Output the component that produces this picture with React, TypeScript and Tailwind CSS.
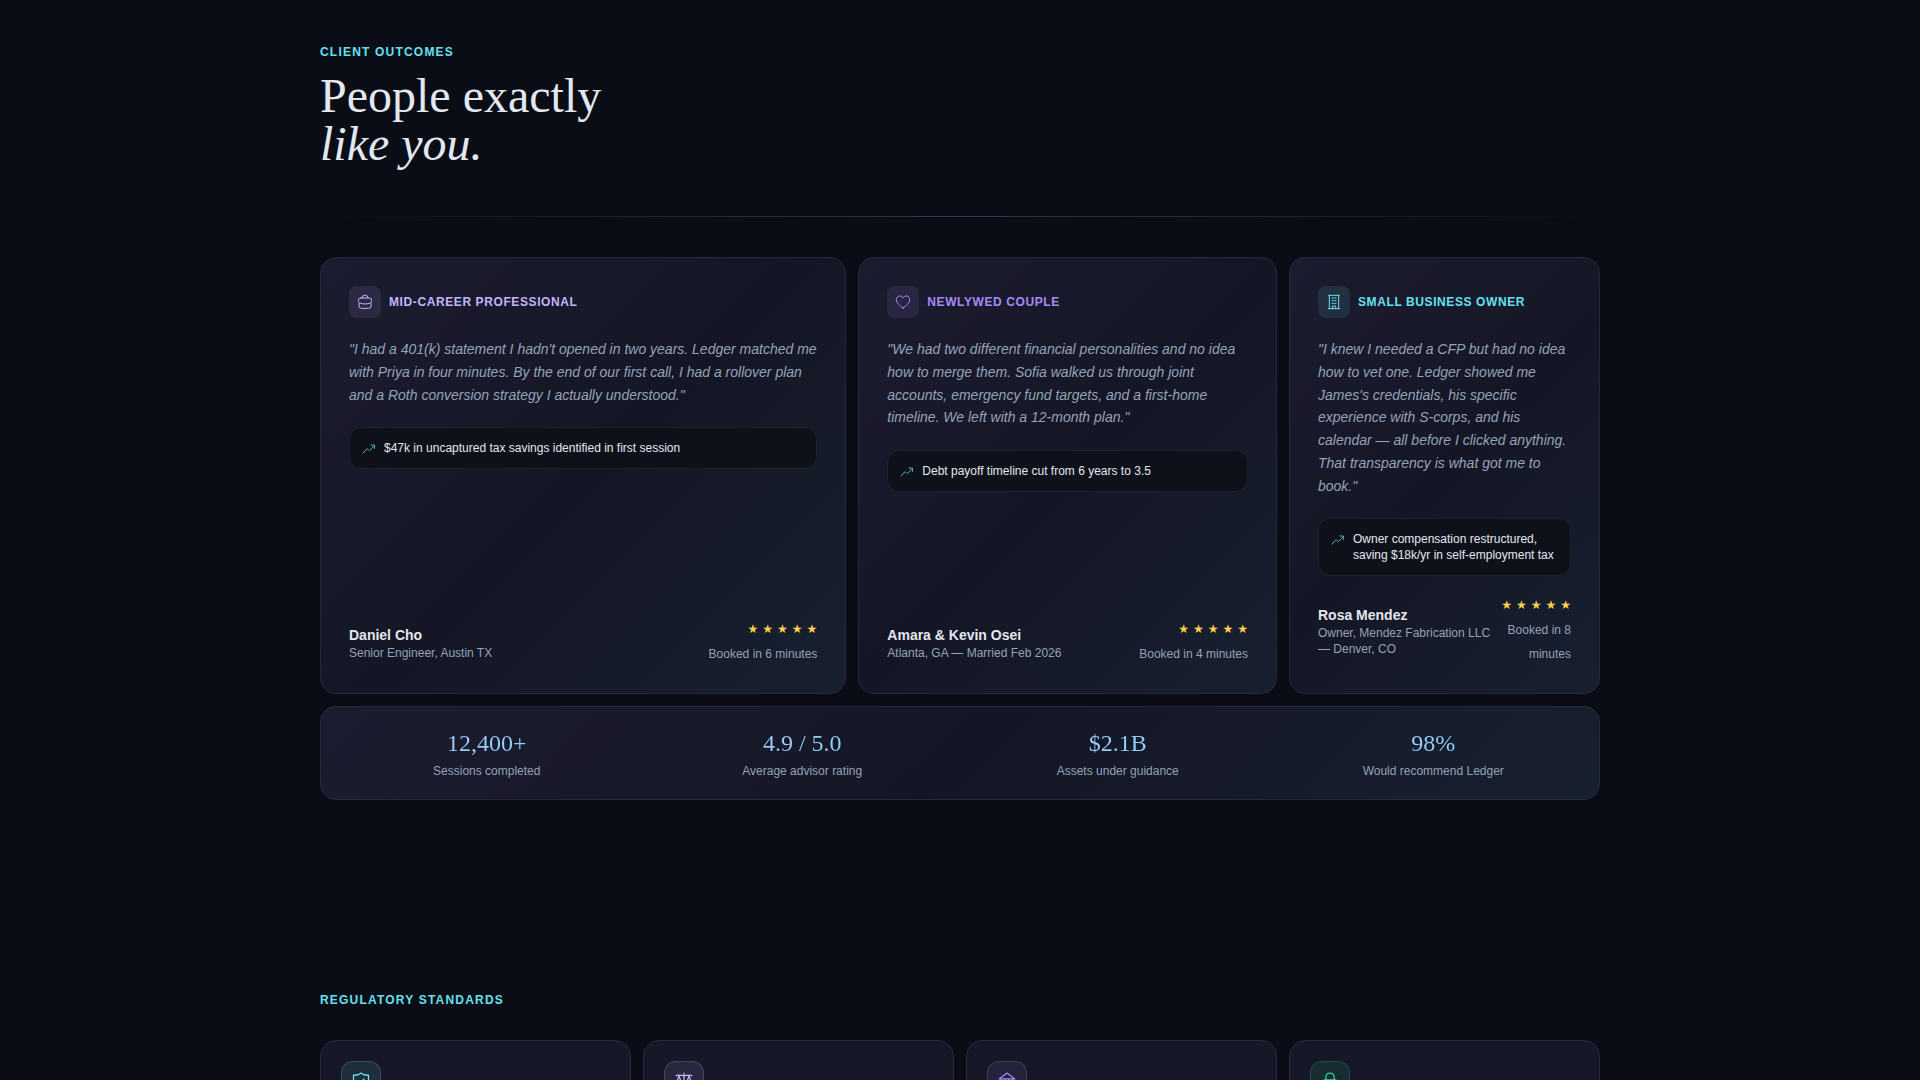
import type { ReactNode } from "react";

const cardClass =
  "rounded-2xl border border-[#272938] bg-[linear-gradient(135deg,#1c1c30_0%,#151625_50%,#17202f_100%)]";

function Icon({ className, children }: { className: string; children: ReactNode }) {
  return (
    <svg
      viewBox="0 0 24 24"
      className={className}
      fill="none"
      stroke="currentColor"
      strokeWidth="1.5"
      strokeLinecap="round"
      strokeLinejoin="round"
      aria-hidden="true"
    >
      {children}
    </svg>
  );
}

const bagIcon = (
  <Icon className="size-4">
    <path d="M8 6V5a3 3 0 0 1 3-3h2a3 3 0 0 1 3 3v1" />
    <path d="M5.500 6h13A3.500 3.500 0 0 1 22 9.500c0 2.500-1.200 3.500-3 4.200-4.500 1.700-9.500 1.700-14 0-1.800-.7-3-1.700-3-4.200A3.500 3.500 0 0 1 5.500 6Z" />
    <path d="M3 13.500V18A3.500 3.500 0 0 0 6.500 21.500h11A3.500 3.500 0 0 0 21 18v-4.500" />
  </Icon>
);

const heartIcon = (
  <Icon className="size-4">
    <path d="M12 21C7 17.500 2 13.500 2 8.500 2 5.500 4.300 3 7.200 3 9.200 3 11 4 12 6c1-2 2.800-3 4.800-3C19.700 3 22 5.500 22 8.500c0 5-5 9-10 12.500Z" />
  </Icon>
);

const buildingIcon = (
  <Icon className="size-4">
    <path d="M4 2h16M5 2v20M19 2v20M3.500 22h17M9 6h2M13 6h2M9 10h2M13 10h2M9 14h2M13 14h2M9.500 22v-4h5v4" />
  </Icon>
);

const trendIcon = (
  <Icon className="mt-0.5 size-3.5 shrink-0 text-[#4fc9c4]">
    <path d="m2 19 5.500-6.500c.8-.9 1.700-.9 2.500 0l1.500 1.500c.9.900 1.800.8 2.500-.2L21 6M15.500 5 21.500 5.500 21.500 11" />
  </Icon>
);

type Story = {
  span: string;
  tone: string;
  tile: string;
  icon: ReactNode;
  label: string;
  quote: string;
  result: string;
  name: string;
  role: string;
  booked: string;
};

const stories: Story[] = [
  {
    span: "lg:col-span-5",
    tone: "text-[#c4b5fd]",
    tile: "bg-[#c4b5fd]/10",
    icon: bagIcon,
    label: "MID-CAREER PROFESSIONAL",
    quote:
      "\"I had a 401(k) statement I hadn't opened in two years. Ledger matched me with Priya in four minutes. By the end of our first call, I had a rollover plan and a Roth conversion strategy I actually understood.\"",
    result: "$47k in uncaptured tax savings identified in first session",
    name: "Daniel Cho",
    role: "Senior Engineer, Austin TX",
    booked: "Booked in 6 minutes",
  },
  {
    span: "lg:col-span-4",
    tone: "text-[#a78bfa]",
    tile: "bg-[#a78bfa]/10",
    icon: heartIcon,
    label: "NEWLYWED COUPLE",
    quote:
      '"We had two different financial personalities and no idea how to merge them. Sofia walked us through joint accounts, emergency fund targets, and a first-home timeline. We left with a 12-month plan."',
    result: "Debt payoff timeline cut from 6 years to 3.5",
    name: "Amara & Kevin Osei",
    role: "Atlanta, GA — Married Feb 2026",
    booked: "Booked in 4 minutes",
  },
  {
    span: "lg:col-span-3",
    tone: "text-[#65e1ee]",
    tile: "bg-[#67e8f9]/10",
    icon: buildingIcon,
    label: "SMALL BUSINESS OWNER",
    quote:
      '"I knew I needed a CFP but had no idea how to vet one. Ledger showed me James\'s credentials, his specific experience with S-corps, and his calendar — all before I clicked anything. That transparency is what got me to book."',
    result: "Owner compensation restructured, saving $18k/yr in self-employment tax",
    name: "Rosa Mendez",
    role: "Owner, Mendez Fabrication LLC — Denver, CO",
    booked: "Booked in 8 minutes",
  },
];

const stats = [
  ["12,400+", "Sessions completed"],
  ["4.9 / 5.0", "Average advisor rating"],
  ["$2.1B", "Assets under guidance"],
  ["98%", "Would recommend Ledger"],
];

const standards = [
  {
    name: "shield",
    style: "border-[#67e8f9]/20 bg-[#67e8f9]/10 text-[#67e8f9]",
    drawing: <path d="M12 2.500 9.500 4C7.500 4.800 5.500 5 3 5v8c0 4.500 4 7 9 9 5-2 9-4.500 9-9V5c-2.500 0-4.500-.2-6.500-1ZM9 13l2.500 2.500L15.500 9.500" />,
  },
  {
    name: "scales",
    style: "border-[#c4b5fd]/20 bg-[#c4b5fd]/10 text-[#c4b5fd]",
    drawing: <path d="M12 2.500V21M8 21h8M2.500 5.500C6 4 9 5.500 12 5.500s6-1.500 9.500 0M6 5.500 3 15h6L6 5.500ZM18 5.500 15 15h6L18 5.500Z" />,
  },
  {
    name: "bank",
    style: "border-[#a78bfa]/20 bg-[#a78bfa]/10 text-[#a78bfa]",
    drawing: <path d="M12 2.500 2.500 9.500h19L12 2.500ZM5 10v8M10 10v8M14 10v8M19 10v8M2.500 21h19" />,
  },
  {
    name: "lock",
    style: "border-[#34d399]/20 bg-[#34d399]/10 text-[#34d399]",
    drawing: <path d="M7 10.500V7.500a5 5 0 0 1 10 0v3M5 10.500h14v11H5Z" />,
  },
];

function StoryCard({ story }: { story: Story }) {
  return (
    <article className={`flex flex-col px-7 pt-7 pb-[27px] ${cardClass} ${story.span}`}>
      <div className={`mb-5 flex items-center gap-2 ${story.tone}`}>
        <span className={`flex size-8 items-center justify-center rounded-lg ${story.tile}`}>{story.icon}</span>
        <h3 className="text-xs font-bold tracking-wider">{story.label}</h3>
      </div>
      <blockquote className="mb-[21px] text-sm leading-relaxed text-[#94a3b8] italic">{story.quote}</blockquote>
      <div className="mb-5 flex items-start gap-2 rounded-xl border border-[#1e202c] bg-[#0f111a] p-3">
        {trendIcon}
        <p className="text-xs text-[#e2e8f0]">{story.result}</p>
      </div>
      <footer className="mt-auto flex items-center justify-between">
        <div>
          <p className="text-sm font-bold text-[#e2e8f0]">{story.name}</p>
          <p className="text-xs text-[#94a3b8]">{story.role}</p>
        </div>
        <div className="text-right">
          <div
            className="flex justify-end gap-1 font-['DejaVu_Sans',sans-serif] text-xs leading-[18px] text-[#fcd34d]"
            role="img"
            aria-label="5 out of 5 stars"
          >
            {[1, 2, 3, 4, 5].map((n) => (
              <span key={n}>★</span>
            ))}
          </div>
          <p className="mt-1 text-xs leading-6 text-[#94a3b8]">{story.booked}</p>
        </div>
      </footer>
    </article>
  );
}

export default function App() {
  return (
    <main className="h-screen overflow-hidden bg-[#0a0d16] px-6 font-['Liberation_Sans',Arial,sans-serif]">
      <section className="mx-auto max-w-7xl pt-11">
        <p className="text-xs font-bold tracking-widest text-[#65e1ee]">CLIENT OUTCOMES</p>
        <h2 className="mt-3 font-['Liberation_Serif',serif] text-5xl leading-none text-[#e2e8f0]">
          People exactly
          <br />
          <em>like you.</em>
        </h2>
        <div className="mt-12 h-px bg-[linear-gradient(90deg,transparent,#263f49,transparent)]" />
        <div className="mt-10 grid gap-3 lg:grid-cols-12">
          {stories.map((story) => (
            <StoryCard key={story.name} story={story} />
          ))}
          <dl className={`grid grid-cols-2 gap-6 p-5 text-center md:grid-cols-4 lg:col-span-12 ${cardClass}`}>
            {stats.map(([value, label]) => (
              <div key={label} className="flex flex-col-reverse gap-1">
                <dt className="text-xs text-[#94a3b8]">{label}</dt>
                <dd className="bg-[linear-gradient(135deg,#c4b5fd,#67e8f9)] bg-clip-text font-['Liberation_Serif',serif] text-2xl text-transparent">
                  {value}
                </dd>
              </div>
            ))}
          </dl>
        </div>
      </section>
      <section className="mx-auto max-w-7xl pt-48">
        <h2 className="text-xs font-bold tracking-widest text-[#65e1ee]">REGULATORY STANDARDS</h2>
        <div className="mt-8 grid gap-3 sm:grid-cols-2 lg:grid-cols-4">
          {standards.map((item) => (
            <article key={item.name} className="h-44 rounded-2xl border border-[#2a2b3a] bg-[#171827] p-5">
              <span className={`flex size-10 items-center justify-center rounded-xl border ${item.style}`}>
                <Icon className="size-5">{item.drawing}</Icon>
              </span>
            </article>
          ))}
        </div>
      </section>
    </main>
  );
}
